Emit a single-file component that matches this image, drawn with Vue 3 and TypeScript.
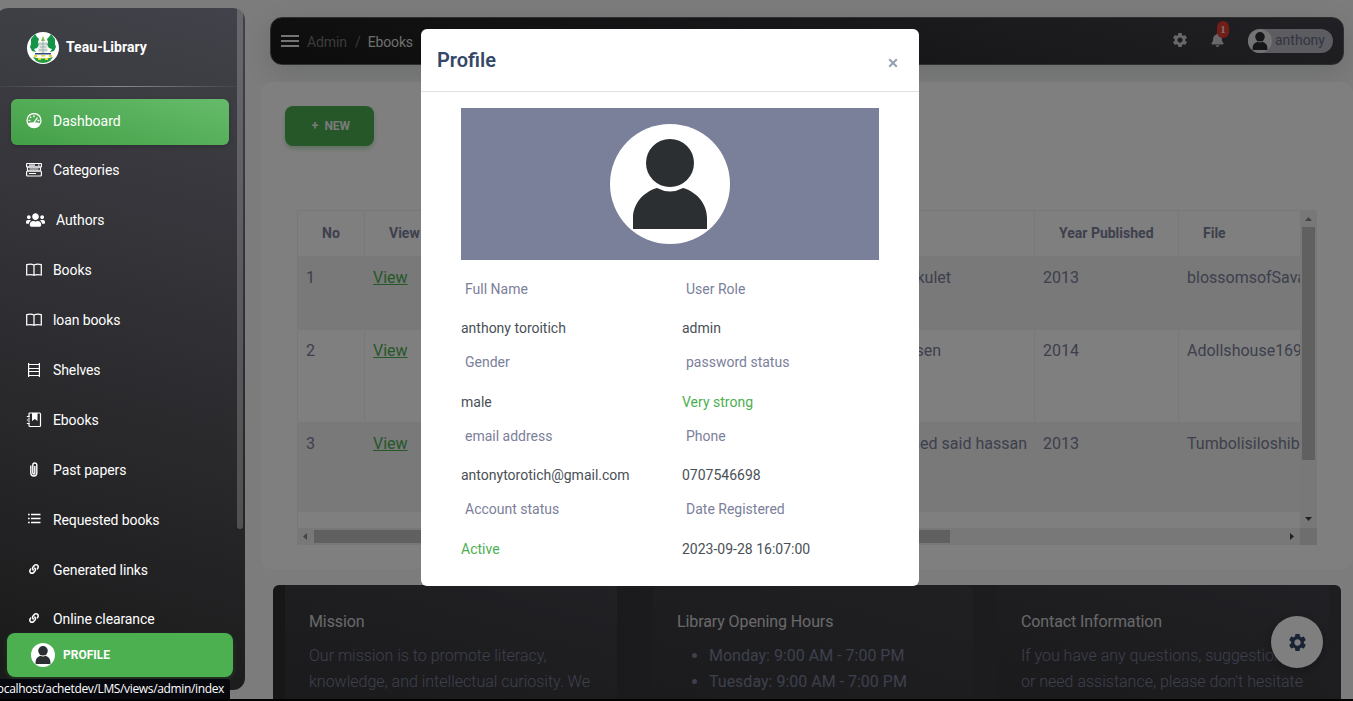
<script setup lang="ts">
interface NavItem { label: string; icon: string }
interface Field { label: string; value: string; good?: boolean }

const nav: NavItem[] = [
  { label: 'Dashboard', icon: 'gauge' },
  { label: 'Categories', icon: 'stack' },
  { label: 'Authors', icon: 'users' },
  { label: 'Books', icon: 'book' },
  { label: 'loan books', icon: 'book' },
  { label: 'Shelves', icon: 'shelf' },
  { label: 'Ebooks', icon: 'journal' },
  { label: 'Past papers', icon: 'clip' },
  { label: 'Requested books', icon: 'list' },
  { label: 'Generated links', icon: 'link' },
  { label: 'Online clearance', icon: 'link' },
]

const books = [
  { no: 1, author: 'H.R Ole kulet', year: 2013, file: 'blossomsofSava' },
  { no: 2, author: 'Henrik Ibsen', year: 2014, file: 'Adollshouse169' },
  { no: 3, author: 'Mohamed said hassan', year: 2013, file: 'Tumbolisiloshib' },
]

const fields: Field[] = [
  { label: 'Full Name', value: 'anthony toroitich' },
  { label: 'User Role', value: 'admin' },
  { label: 'Gender', value: 'male' },
  { label: 'password status', value: 'Very strong', good: true },
  { label: 'email address', value: 'antonytorotich@gmail.com' },
  { label: 'Phone', value: '0707546698' },
  { label: 'Account status', value: 'Active', good: true },
  { label: 'Date Registered', value: '2023-09-28 16:07:00' },
]

const gear = 'M19.14 12.94c.04-.3.06-.61.06-.94 0-.32-.02-.64-.07-.94l2.03-1.58c.18-.14.23-.41.12-.61l-1.92-3.32c-.12-.22-.37-.29-.59-.22l-2.39.96c-.5-.38-1.03-.7-1.62-.94l-.36-2.54c-.04-.24-.24-.41-.48-.41h-3.84c-.24 0-.43.17-.47.41l-.36 2.54c-.59.24-1.13.57-1.62.94l-2.39-.96c-.22-.08-.47 0-.59.22L2.74 8.87c-.12.21-.08.47.12.61l2.03 1.58c-.05.3-.09.63-.09.94s.02.64.07.94l-2.03 1.58c-.18.14-.23.41-.12.61l1.92 3.32c.12.22.37.29.59.22l2.39-.96c.5.38 1.03.7 1.62.94l.36 2.54c.05.24.24.41.48.41h3.84c.24 0 .44-.17.47-.41l.36-2.54c.59-.24 1.13-.56 1.62-.94l2.39.96c.22.08.47 0 .59-.22l1.92-3.32c.12-.22.07-.47-.12-.61l-2.01-1.58zM12 15.6c-1.98 0-3.6-1.62-3.6-3.6s1.62-3.6 3.6-3.6 3.6 1.62 3.6 3.6-1.62 3.6-3.6 3.6z'
const bell = 'M224 512c35.32 0 63.97-28.65 63.97-64H160.03c0 35.35 28.65 64 63.97 64zm215.39-149.71c-19.32-20.76-55.47-51.99-55.47-154.29 0-77.7-54.48-139.9-127.94-155.16V32c0-17.67-14.32-32-31.98-32s-31.98 14.33-31.98 32v20.84C118.56 68.1 64.08 130.3 64.08 208c0 102.3-36.15 133.53-55.47 154.29-6 6.45-8.66 14.16-8.61 21.71.11 16.4 12.98 32 32.1 32h383.8c19.12 0 32-15.6 32.1-32 .05-7.55-2.61-15.27-8.61-21.71z'
const users = 'M96 224c35.3 0 64-28.7 64-64s-28.7-64-64-64-64 28.7-64 64 28.7 64 64 64zm448 0c35.3 0 64-28.7 64-64s-28.7-64-64-64-64 28.7-64 64 28.7 64 64 64zm32 32h-64c-17.6 0-33.5 7.1-45.1 18.6 40.3 22.1 68.9 62 75.1 109.4h66c17.7 0 32-14.3 32-32v-32c0-35.3-28.7-64-64-64zm-256 0c61.9 0 112-50.1 112-112S381.9 32 320 32 208 82.1 208 144s50.1 112 112 112zm76.8 32h-8.3c-20.8 10-43.9 16-68.5 16s-47.6-6-68.5-16h-8.3C179.6 288 128 339.6 128 403.2V432c0 26.5 21.5 48 48 48h288c26.5 0 48-21.5 48-48v-28.8c0-63.6-51.6-115.2-115.2-115.2zm-223.7-13.4C161.5 263.1 145.6 256 128 256H64c-35.3 0-64 28.7-64 64v32c0 17.7 14.3 32 32 32h65.9c6.3-47.4 34.9-87.3 75.2-109.4z'
const link = 'M326.612 185.391c59.747 59.809 58.927 155.698.36 214.59-.11.12-.24.25-.36.37l-67.2 67.2c-59.27 59.27-155.699 59.262-214.96 0-59.27-59.26-59.27-155.7 0-214.96l37.106-37.106c9.84-9.84 26.786-3.3 27.294 10.606.648 17.722 3.826 35.527 9.69 52.721 1.986 5.822.567 12.262-3.783 16.612l-13.087 13.087c-28.026 28.026-28.905 73.66-1.155 101.96 28.024 28.579 74.086 28.749 102.325.51l67.2-67.19c28.191-28.191 28.073-73.757 0-101.83-3.701-3.694-7.429-6.564-10.341-8.569a16.037 16.037 0 0 1-6.947-12.606c-.396-10.567 3.348-21.456 11.698-29.806l21.054-21.055c5.521-5.521 14.182-6.199 20.584-1.731a152.482 152.482 0 0 1 20.522 17.197zM467.547 44.449c-59.261-59.262-155.69-59.27-214.96 0l-67.2 67.2c-.12.12-.25.25-.36.37-58.566 58.892-59.387 154.781.36 214.59a152.454 152.454 0 0 0 20.521 17.196c6.402 4.468 15.064 3.789 20.584-1.731l21.054-21.055c8.35-8.35 12.094-19.239 11.698-29.806a16.037 16.037 0 0 0-6.947-12.606c-2.912-2.005-6.64-4.875-10.341-8.569-28.073-28.073-28.191-73.639 0-101.83l67.2-67.19c28.239-28.239 74.3-28.069 102.325.51 27.75 28.3 26.872 73.934-1.155 101.96l-13.087 13.087c-4.35 4.35-5.769 10.79-3.783 16.612 5.864 17.194 9.042 34.999 9.69 52.721.509 13.906 17.454 20.446 27.294 10.606l37.106-37.106c59.271-59.259 59.271-155.699.001-214.959z'
const bust = 'M23 105V94C23 80 33 68 47 64Q60 71 73 64C87 68 97 80 97 94V105Z'
</script>

<template>
  <div class="page">
    <aside class="sidebar">
      <div class="brand">
        <svg class="crest" viewBox="0 0 32 32">
          <circle cx="16" cy="16" r="16" fill="#fff" />
          <path d="M4 7l4-5 2 3 2 2-1 3 1 3-2 3-3 1 2 3-4-1-2-4 1-3zM28 7l-4-5-2 3-2 2 1 3-1 3 2 3 3 1-2 3 4-1 2-4-1-3z" fill="#159447" />
          <path d="M16 4l2 5h-4z" fill="#8ab54a" />
          <path d="M12 10h8l1 9q-5 4-10 0z" fill="#dde7e2" />
          <path d="M11 12h10M13 15h6M16 9v12M12 18h8" stroke="#8a9d95" stroke-width=".7" />
          <path d="M8 21h16v1.500H8z" fill="#2d4a79" />
          <path d="M6 25q10 3 20 0l-3 4q-7 4-14 0z" fill="#229b43" />
          <path d="M7 23h3v2H7zm15 0h3v2h-3zM11 26h3v2h-3zm7 0h3v2h-3zM14 23h4v1.500h-4z" fill="#ead92d" />
        </svg>
        <span>Teau-Library</span>
      </div>
      <hr class="rule" />
      <nav class="nav">
        <a v-for="(n, i) in nav" :key="n.label" class="item" :class="{ active: i === 0 }">
          <svg v-if="n.icon === 'gauge'" class="ico" viewBox="0 0 16 16">
            <circle cx="8" cy="7.500" r="7" fill="none" stroke="currentColor" stroke-width="1.300" />
            <path d="M1.500 10.300Q8 8 14.500 10.300Q12.500 14.500 8 14.500T1.500 10.300Z" fill="currentColor" />
            <path d="M8 9.500L11.500 4.500M8 2.200v2M4 3.700l1.200 1.200M2.500 7.500h2M11.500 7.500h2" stroke="currentColor" stroke-width="1.300" fill="none" />
          </svg>
          <svg v-else-if="n.icon === 'stack'" class="ico" viewBox="0 0 16 16" fill="none" stroke="currentColor" stroke-width="1.200">
            <rect x=".6" y="1.500" width="14.800" height="3.500" rx=".5" />
            <rect x="1.500" y="5" width="13" height="4" rx=".8" />
            <rect x=".6" y="9" width="14.800" height="5" rx="1" />
            <path d="M3 3.200h6M3.500 7h9M3 11.500h7M12 3.200h1.500" />
          </svg>
          <svg v-else-if="n.icon === 'users'" class="ico group" viewBox="0 0 640 512"><path :d="users" fill="currentColor" /></svg>
          <svg v-else-if="n.icon === 'book'" class="ico" viewBox="0 0 16 16" fill="none" stroke="currentColor" stroke-width="1.250">
            <path d="M8 3Q5 1.300 .7 2.600V13Q5 12 8 13.300Q11 12 15.300 13V2.600Q11 1.300 8 3V13.300" />
          </svg>
          <svg v-else-if="n.icon === 'shelf'" class="ico" viewBox="0 0 16 16" fill="none" stroke="currentColor" stroke-width="1.200">
            <path d="M2.600 1v14M13.400 1v14M2.600 2.500h10.800M2.600 6.500h10.800M2.600 9.500h10.800M2.600 13.500h10.800" />
          </svg>
          <svg v-else-if="n.icon === 'journal'" class="ico" viewBox="0 0 16 16" fill="none" stroke="currentColor" stroke-width="1.200">
            <path d="M3 4V2q0-1 1-1h9.500q1 0 1 1v11.500q0 1-1 1H4q-1 0-1-1V12M.8 4.500h3M.8 8h3M.8 11.500h3M3 5.500v1.500M3 9v1.500" />
            <path d="M6 1h5.500v8L8.800 7 6 9z" fill="currentColor" stroke="none" />
          </svg>
          <svg v-else-if="n.icon === 'clip'" class="ico" viewBox="0 0 16 16" fill="none" stroke="currentColor" stroke-width="1.400">
            <path d="M4.800 3.500v7.500a3 3 0 0 0 6 0V3a2 2 0 0 0-4 0v8a1 1 0 0 0 2 0V4" />
          </svg>
          <svg v-else-if="n.icon === 'list'" class="ico" viewBox="0 0 16 16" fill="none" stroke="currentColor" stroke-width="1.500">
            <path d="M5 2.500h9.500M5 6.500h9.500M5 10.500h9.500M2 2.500h1.700M2 6.500h1.700M2 10.500h1.700" />
          </svg>
          <svg v-else class="ico small" viewBox="0 0 512 512"><path :d="link" fill="currentColor" /></svg>
          <span>{{ n.label }}</span>
        </a>
      </nav>
      <div class="thumb"></div>
      <div class="profile-btn">
        <svg class="mini" viewBox="0 0 120 120"><circle cx="60" cy="60" r="60" fill="#fff" /><circle cx="60" cy="39" r="24" fill="#2b2f32" /><path :d="bust" fill="#2b2f32" /></svg>
        <span>PROFILE</span>
      </div>
    </aside>

    <main class="main">
      <header class="topbar">
        <div class="burger"><i></i><i></i><i></i></div>
        <span class="crumb">Admin</span><span class="slash">/</span><span class="here">Ebooks</span>
        <svg class="cog" viewBox="2.400 2.400 19.200 19.200"><path :d="gear" fill="currentColor" /></svg>
        <div class="bell">
          <svg viewBox="0 0 448 512"><path :d="bell" fill="currentColor" /></svg>
          <b>1</b>
        </div>
        <div class="user">
          <svg viewBox="0 0 120 120"><circle cx="60" cy="60" r="60" fill="#e6e6e8" /><circle cx="60" cy="39" r="24" fill="#2b2f32" /><path :d="bust" fill="#2b2f32" /></svg>
          <span>anthony</span>
        </div>
      </header>

      <section class="card">
        <button class="new"><span class="plus">+</span>NEW</button>
        <div class="table-wrap">
          <div class="viewport">
            <div class="row head"><div>No</div><div>View</div><div></div><div>Year Published</div><div>File</div></div>
            <div v-for="b in books" :key="b.no" class="row" :class="'r' + b.no">
              <div>{{ b.no }}</div><div><a>View</a></div><div class="author">{{ b.author }}</div><div>{{ b.year }}</div><div class="file">{{ b.file }}</div>
            </div>
          </div>
          <div class="vbar">
            <svg viewBox="0 0 17 17"><path d="M5 11h7L8.500 7z" fill="#8a8a8a" /></svg>
            <div class="vthumb"></div>
            <svg class="end" viewBox="0 0 17 17"><path d="M5 6h7l-3.500 4z" fill="#454545" /></svg>
          </div>
          <div class="hbar">
            <svg viewBox="0 0 17 17"><path d="M10 5v7L6 8.500z" fill="#8a8a8a" /></svg>
            <div class="hthumb"></div>
            <svg class="end" viewBox="0 0 17 17"><path d="M7 5v7l4-3.500z" fill="#454545" /></svg>
          </div>
          <div class="corner"></div>
        </div>
      </section>

      <footer class="footer">
        <div class="col">
          <h6>Mission</h6>
          <p>Our mission is to promote literacy,<br />knowledge, and intellectual curiosity. We</p>
        </div>
        <div class="col mid">
          <h6>Library Opening Hours</h6>
          <ul><li>Monday: 9:00 AM - 7:00 PM</li><li>Tuesday: 9:00 AM - 7:00 PM</li></ul>
        </div>
        <div class="col last">
          <h6>Contact Information</h6>
          <p>If you have any questions, suggestions,<br />or need assistance, please don't hesitate</p>
        </div>
      </footer>
    </main>

    <div class="fab"><svg viewBox="2.400 2.400 19.200 19.200"><path :d="gear" fill="#344767" /></svg></div>
    <div class="backdrop"></div>

    <div class="modal">
      <div class="modal-head">
        <h5>Profile</h5>
        <svg class="close" viewBox="0 0 10 10"><path d="M1.200 1.200l7.600 7.600M8.800 1.200L1.200 8.800" stroke="#97a1b3" stroke-width="2.100" /></svg>
      </div>
      <div class="modal-body">
        <div class="banner">
          <svg viewBox="0 0 120 120"><circle cx="60" cy="60" r="60" fill="#fff" /><circle cx="60" cy="39" r="24" fill="#2b2f32" /><path :d="bust" fill="#2b2f32" /></svg>
        </div>
        <div class="fields">
          <div v-for="f in fields" :key="f.label" class="field">
            <label>{{ f.label }}</label>
            <p :class="{ good: f.good }">{{ f.value }}</p>
          </div>
        </div>
      </div>
    </div>

    <div class="status"><span>localhost/achetdev/LMS/views/admin/index</span></div>
    <div class="bottom-edge"></div>
  </div>
</template>

<style>
html, body { overflow: hidden; }
</style>

<style scoped>
* { box-sizing: border-box; }
.page { position: relative; width: 1353px; height: 701px; overflow: hidden; display: flex; background: #f8f8f8; font-family: Roboto, "Liberation Sans", sans-serif; color: #7b809a; }

.sidebar { position: relative; z-index: 3; width: 249px; height: 682px; margin: 8px 0 0 -4px; padding-left: 4px; border-radius: 12px; background: linear-gradient(195deg, #42424a, #191919); flex: none; color: #fff; overflow: hidden; }
.brand { display: flex; align-items: center; height: 78px; padding: 1px 0 0 27px; font-size: 14px; font-weight: 700; }
.brand span { margin-left: 7px; padding-bottom: 2px; letter-spacing: .05px; }
.crest { width: 32px; height: 32px; }
.rule { height: 1px; width: 237px; margin: 0; border: 0; background: linear-gradient(90deg, rgba(255,255,255,.03), rgba(255,255,255,.4), rgba(255,255,255,.03)); }
.nav { padding: 12px 0 0 11px; display: flex; flex-direction: column; width: 229px; }
.item { height: 46px; margin-bottom: 4px; display: flex; align-items: center; padding-left: 15px; font-size: 14px; letter-spacing: -.1px; flex: none; }
.item.active { margin-bottom: 2px; border-radius: 6px; background: linear-gradient(195deg, #66bb6a, #43a047); padding-bottom: 2px; letter-spacing: 0; box-shadow: 0 2px 4px rgba(0,0,0,.18); }
.item:last-child { margin-top: -1px; }
.ico { width: 16px; height: 16px; margin-right: 11px; flex: none; }
.group { width: 19px; }
.small { width: 10px; height: 10px; margin: 0 14px 3px 3px; }

.thumb { position: absolute; left: 241px; top: 0; width: 6px; height: 521px; border-radius: 0 0 3px 3px; background: rgba(255,255,255,.2); }
.profile-btn { position: absolute; left: 11px; top: 625px; width: 226px; height: 44px; border-radius: 8px; background: #4caf50; display: flex; align-items: center; padding-left: 24px; font-size: 12px; font-weight: 700; box-shadow: 0 2px 5px rgba(76,175,80,.2); }
.mini { width: 24px; height: 24px; margin-right: 8px; }

.main { width: 1092px; margin-left: 16px; flex: none; display: flex; flex-direction: column; }
.topbar { height: 48px; margin: 17px 9px 0 9px; border-radius: 12px; background: linear-gradient(195deg, #42424a, #191919); border: 1px solid #5c5c5c; display: flex; align-items: center; padding: 0 10px; font-size: 14px; flex: none; box-shadow: 0 8px 26px rgba(50,70,60,.16); }
.burger { width: 18px; display: flex; flex-direction: column; gap: 3px; margin-right: 8px; }
.burger i { height: 2px; background: #e8e8e8; display: block; }
.crumb { color: #777; letter-spacing: -.1px; }
.slash { color: #6c757d; margin: 0 8px; }
.here { color: #ddd; letter-spacing: -.15px; margin-left: -1px; }
.topbar > span { padding-top: 1px; }
.cog { width: 14px; height: 14px; color: #d0d0d4; margin: 0 0 2px auto; }
.bell { position: relative; width: 13px; height: 14px; margin: 0 0 2px 24px; color: #d0d0d4; }
.bell svg { width: 13px; height: 14px; display: block; }
.bell b { position: absolute; left: 6px; top: -12px; width: 12px; height: 17px; border-radius: 6px; background: #e63b30; color: #eee; font: 700 10px/17px "Liberation Serif", serif; text-align: center; }
.user { display: flex; align-items: center; width: 85px; height: 24px; margin-left: 24px; border-radius: 12px; background: #b8b8c2; color: #666a86; font-size: 14px; }
.user svg { width: 24px; height: 24px; margin-right: 3px; }
.user span { padding-bottom: 2px; }

.card { margin-top: 17px; height: 487px; border-radius: 12px; background: #fff; padding: 24px 24px 0; flex: none; }
.new { display: flex; align-items: center; justify-content: center; width: 89px; height: 40px; border: 0; border-radius: 8px; background: #4caf50; color: #f4f4f4; font: 700 12px Roboto, sans-serif; padding: 0 0 0 3px; box-shadow: 0 3px 4px rgba(76,175,80,.35); }
.plus { margin-right: 6px; }
.table-wrap { margin: 64px 0 0 12px; width: 1020px; height: 335px; display: grid; grid-template-columns: 1003px 17px; grid-template-rows: 318px 17px; }
.viewport { overflow: hidden; border-left: 1px solid #f0f0f3; border-top: 1px solid #f0f0f3; }
.row { display: grid; grid-template-columns: 66px 92px 578px 144px 122px; font-size: 16px; }
.row > div { border-left: 1px solid #f0f0f3; padding: 11px 8px; white-space: nowrap; line-height: 19px; }
.row > div:first-child { border-left: 0; }
.row > .file { padding-right: 0; }
.row.head { height: 45px; font-size: 14px; font-weight: 700; }
.head > div { padding: 13px 24px; }
.r1, .r3 { background: #f2f2f2; }
.r1 > div, .r3 > div { border-color: transparent; padding-top: 12px; }
.r1 { height: 74px; }
.r2 { height: 92px; }
.r3 { height: 90px; }
.author { text-align: right; }
.r1 .author { padding-right: 83px; }
.r2 .author { padding-right: 93px; }
.r3 .author { padding-right: 7px; }
.row a { color: #4caf50; text-decoration: underline; }
.vbar { background: #f1f1f1; display: flex; flex-direction: column; align-items: center; }
.vbar svg, .hbar svg { width: 17px; height: 17px; flex: none; }
.vbar .end { margin-top: auto; }
.vthumb { width: 13px; height: 233px; background: #c1c1c1; }
.hbar { background: #f1f1f1; display: flex; align-items: center; }
.hbar .end { margin-left: auto; }
.hthumb { width: 636px; height: 13px; background: #c1c1c1; }
.corner { background: #dcdcdc; }

.footer { margin: 16px 12px 0; height: 260px; border-radius: 6px; background: linear-gradient(90deg, #2e2e31, #37373b 40%, #3c3c41); padding: 0 12px; display: flex; flex: none; }
.col { width: 332px; padding: 26px 0 0 24px; background: linear-gradient(195deg, #42424a, #38383c 45%, #303032); flex: none; }
.col.mid { width: 320px; margin: 0 24px 0 36px; border-radius: 8px; background: linear-gradient(195deg, #404046, #39393d 45%, #303032); }
h6 { margin: 0 0 10px; font-size: 16px; line-height: 22px; font-weight: 400; letter-spacing: -.1px; color: #d2d2d4; }
.footer p { margin: 0; font-size: 16px; line-height: 26px; font-weight: 300; white-space: nowrap; }
ul { margin: 0; padding-left: 32px; font-size: 16px; line-height: 26px; }

.fab { position: absolute; left: 1271px; top: 616px; width: 52px; height: 52px; border-radius: 50%; background: #fff; display: flex; align-items: center; justify-content: center; box-shadow: 0 2px 10px rgba(0,0,0,.3); }
.fab svg { width: 17px; height: 17px; }
.backdrop { position: absolute; inset: 0; background: rgba(0,0,0,.5); }

.modal { position: absolute; z-index: 4; left: 421px; top: 29px; width: 498px; height: 557px; border-radius: 6px; background: #fff; }
.modal-head { height: 63px; border-bottom: 1px solid #dee2e6; display: flex; align-items: center; justify-content: space-between; padding: 0 21px 0 16px; }
h5 { margin: 0; font-size: 20px; font-weight: 600; color: #344767; }
.close { width: 10px; height: 10px; margin-top: 6px; }
.modal-body { padding: 16px 40px 0; }
.banner { height: 152px; background: #7b809a; display: flex; align-items: center; justify-content: center; }
.banner svg { width: 120px; height: 120px; }
.fields { display: grid; grid-template-columns: 221px 197px; grid-auto-rows: 73.400px; padding-top: 18px; font-size: 14px; }
.field label { display: block; line-height: 22px; padding-left: 4px; }
.field p { margin: 17.400px 0 0; line-height: 22px; color: #495057; }
.field p.good { color: #4caf50; }

.status { position: absolute; z-index: 5; left: 0; top: 679px; width: 230px; height: 20px; background: #08080f; color: #fff; border-radius: 0 3px 0 0; overflow: hidden; display: flex; justify-content: flex-end; align-items: center; padding: 0 6px 1px 0; font: 12px "Open Sans", sans-serif; letter-spacing: -.35px; white-space: nowrap; }
.bottom-edge { position: absolute; z-index: 6; left: 0; right: 0; bottom: 0; height: 2px; background: #000; }
</style>
